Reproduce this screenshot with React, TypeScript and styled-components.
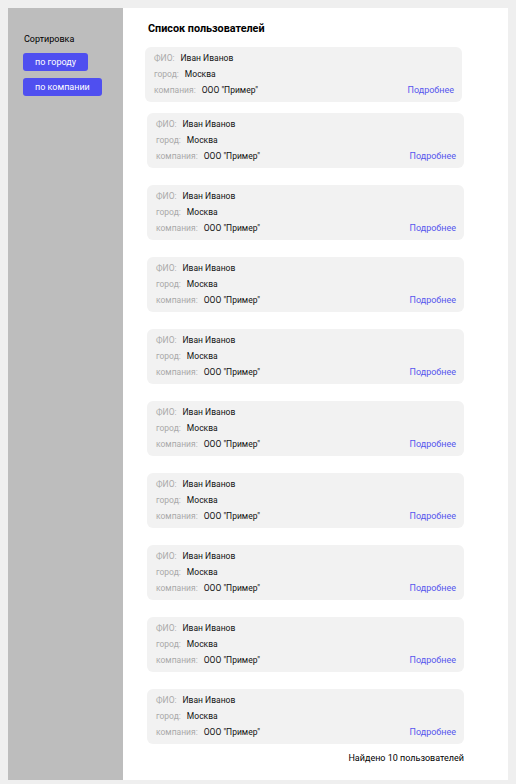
import React from "react";
import styled, { createGlobalStyle } from "styled-components";

const GlobalStyle = createGlobalStyle`
  html, body {
    margin: 0;
    padding: 0;
    background: #efefef;
  }
  body {
    padding: 8px;
    font-family: Roboto, "Noto Sans", sans-serif;
    color: #000;
  }
`;

const Layout = styled.div`
  display: flex;
  height: 772px;
  width: 500px;
  background: #fff;
`;

const Sidebar = styled.aside`
  width: 115px;
  flex-shrink: 0;
  background: #bdbdbd;
  padding: 26px 0 0 15px;
  box-sizing: border-box;
`;

const SortTitle = styled.div`
  font-size: 9px;
  line-height: 11px;
  margin: 0 0 8px 1px;
`;

const SortButton = styled.button`
  display: block;
  height: 18px;
  padding: 0 12px;
  margin-bottom: 7px;
  border: none;
  border-radius: 3px;
  background: #4f4ff0;
  color: #fff;
  font-family: inherit;
  font-size: 9px;
  cursor: pointer;
`;

const Main = styled.main`
  flex: 1;
  padding: 14px 0 0 24px;
  box-sizing: border-box;
  display: flex;
  flex-direction: column;
`;

const Title = styled.h1`
  margin: 0 0 11px 1px;
  font-size: 10.8px;
  line-height: 14px;
  font-weight: 700;
`;

const List = styled.div`
  width: 317px;
  display: flex;
  flex-direction: column;
  gap: 17px;
`;

const Card = styled.div<{ $active?: boolean }>`
  height: 55px;
  box-sizing: border-box;
  padding: 3px 8px 0 9px;
  background: #f2f2f2;
  border-radius: 6px;
  ${(p) => (p.$active ? "transform: translateX(-2px); margin-bottom: -6px;" : "")}
`;

const Row = styled.div`
  display: flex;
  align-items: center;
  height: 16px;
  font-size: 8.5px;
`;

const Label = styled.span`
  color: #a9a9a9;
  margin-right: 6px;
`;

const Value = styled.span`
  color: #111;
`;

const More = styled.a`
  margin-left: auto;
  color: #5656ee;
  font-size: 9px;
  cursor: pointer;
`;

const Found = styled.div`
  width: 317px;
  text-align: right;
  font-size: 9px;
  margin-top: 9px;
`;

const users = Array.from({ length: 10 }, (_, i) => ({
  id: i,
  name: "Иван Иванов",
  city: "Москва",
  company: 'ООО "Пример"',
}));

export default function App() {
  return (
    <>
      <GlobalStyle />
      <Layout>
        <Sidebar>
          <SortTitle>Сортировка</SortTitle>
          <SortButton>по городу</SortButton>
          <SortButton>по компании</SortButton>
        </Sidebar>
        <Main>
          <Title>Список пользователей</Title>
          <List>
            {users.map((u, i) => (
              <Card key={u.id} $active={i === 0}>
                <Row>
                  <Label>ФИО:</Label>
                  <Value>{u.name}</Value>
                </Row>
                <Row>
                  <Label>город:</Label>
                  <Value>{u.city}</Value>
                </Row>
                <Row>
                  <Label>компания:</Label>
                  <Value>{u.company}</Value>
                  <More>Подробнее</More>
                </Row>
              </Card>
            ))}
          </List>
          <Found>Найдено 10 пользователей</Found>
        </Main>
      </Layout>
    </>
  );
}
